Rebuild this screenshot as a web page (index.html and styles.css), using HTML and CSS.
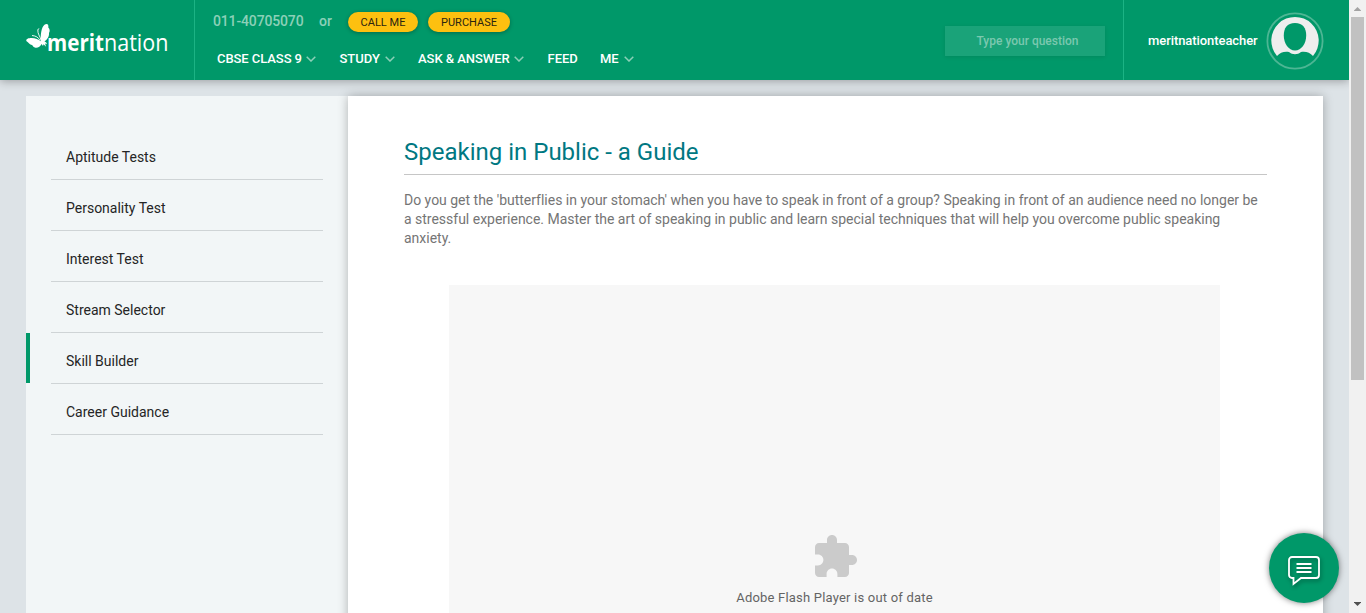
FILE: index.html
```html
<!DOCTYPE html>
<html lang="en">
<head>
<meta charset="utf-8">
<title>Speaking in Public - a Guide</title>
<link rel="stylesheet" href="styles.css">
</head>
<body>
<div class="page">
  <header class="header">
    <a class="logo">
      <svg width="150" height="40" viewBox="0 0 150 40">
        <g fill="#fff">
          <path d="M14.800 18.300C14.500 12 15.200 4.500 18.500 1.800 20.500.3 23 1 22.300 4.500c1.700 1.500 1.700 4 .7 5.500.3 4-2 6.500-4.500 8.500 1.500.5 2.300 1.500 2.300 2.700l-1.800-.7 1.200 3.200-2.700-2.500-.5 1.800-1.500-2C14.500 23.500 12 25 9.500 24.700 7.500 24.500 7 23 6 22 3.500 21.500 2.800 19.500.3 18 0 15.800 2.500 15 5.500 15c4 0 7 1.300 9.300 3.300z"/>
          <path d="M14 17.500C12.500 14.500 10 12.800 6 12.500M15 17c-1-4-3.500-6-3.200-10.500l1.400-.8" fill="none" stroke="#fff" stroke-width=".9"/>
          <text class="logo-bold" x="21" y="28" textLength="57" lengthAdjust="spacingAndGlyphs">merit</text>
          <text class="logo-light" x="78" y="28" textLength="64.500" lengthAdjust="spacingAndGlyphs">nation</text>
        </g>
      </svg>
    </a>
    <div class="header-main">
      <div class="contact">
        <span class="phone">011-40705070</span><span class="or">or</span>
        <a class="pill call">CALL ME</a><a class="pill purchase">PURCHASE</a>
      </div>
      <nav class="nav">
        <a class="n1">CBSE CLASS 9<svg class="chev" viewBox="0 0 10 6"><path d="M.7.7 5 5 9.300.7"/></svg></a>
        <a class="n2">STUDY<svg class="chev" viewBox="0 0 10 6"><path d="M.7.7 5 5 9.300.7"/></svg></a>
        <a class="n3">ASK &amp; ANSWER<svg class="chev" viewBox="0 0 10 6"><path d="M.7.7 5 5 9.300.7"/></svg></a>
        <a class="n4">FEED</a>
        <a class="n5">ME<svg class="chev" viewBox="0 0 10 6"><path d="M.7.7 5 5 9.300.7"/></svg></a>
      </nav>
    </div>
    <div class="ask">Type your question</div>
    <div class="user">
      <span class="user-name">meritnationteacher</span>
      <svg class="avatar" width="58" height="58" viewBox="0 0 58 58">
        <circle cx="29" cy="29" r="27.600" fill="none" stroke="#4db694" stroke-width="1.800"/>
        <path d="M11 44A23.700 23.700 0 1 1 47 44C44 40.500 39.500 39 35 40c-3.500 3-8.500 3-12 0-4.500-1-9 .5-12 4z" fill="#eee"/>
        <path d="M29 11c8 0 11.200 5 11.200 12.500C40.200 31.500 35.500 38.500 29 38.500S17.800 31.500 17.800 23.500C17.800 16 21 11 29 11z" fill="#009869"/>
      </svg>
    </div>
  </header>

  <div class="layout">
    <aside class="sidebar">
      <ul class="menu">
        <li>Aptitude Tests</li>
        <li>Personality Test</li>
        <li>Interest Test</li>
        <li>Stream Selector</li>
        <li class="active">Skill Builder</li>
        <li>Career Guidance</li>
      </ul>
    </aside>
    <main class="content">
      <h1>Speaking in Public - a Guide</h1>
      <p>Do you get the 'butterflies in your stomach' when you have to speak in front of a group? Speaking in front of an audience need no longer be a stressful experience. Master the art of speaking in public and learn special techniques that will help you overcome public speaking anxiety.</p>
      <div class="plugin">
        <svg width="48" height="48" viewBox="0 0 24 24"><path fill="#cbcbcb" d="M20.500 11H19V7c0-1.100-.9-2-2-2h-4V3.500C13 2.120 11.880 1 10.500 1S8 2.120 8 3.500V5H4c-1.100 0-1.990.9-1.990 2v3.800H3.500c1.490 0 2.700 1.210 2.700 2.700s-1.210 2.700-2.700 2.700H2V20c0 1.100.9 2 2 2h3.800v-1.500c0-1.490 1.210-2.700 2.700-2.700 1.490 0 2.700 1.210 2.700 2.700V22H17c1.100 0 2-.9 2-2v-4h1.500c1.380 0 2.500-1.120 2.500-2.500S21.880 11 20.500 11z"/></svg>
        <span>Adobe Flash Player is out of date</span>
      </div>
    </main>
  </div>
</div>

<div class="scrollbar">
  <svg width="17" height="17" viewBox="0 0 17 17"><path d="M8.500 7 12 10.500V11H5v-.5z" fill="#a3a3a3"/></svg>
  <div class="thumb"></div>
  <svg class="down" width="17" height="17" viewBox="0 0 17 17"><path d="M8.500 10 12 6.500V6H5v.5z" fill="#505050"/></svg>
</div>

<a class="chat">
  <svg width="34" height="32" viewBox="0 0 34 32">
    <path d="M5 2h24a3 3 0 0 1 3 3v15a3 3 0 0 1-3 3H14l-7.500 6V23H5a3 3 0 0 1-3-3V5a3 3 0 0 1 3-3z" fill="none" stroke="#fff" stroke-width="1.800"/>
    <path d="M9.500 9h15M9.500 13h15M9.500 17h15" stroke="#fff" stroke-width="1.800"/>
  </svg>
</a>
</body>
</html>
```
FILE: styles.css
```css
* { box-sizing: border-box; }
body {
  margin: 0;
  height: 613px;
  overflow: hidden;
  display: flex;
  background: #dde3e7;
  font-family: Roboto, "Liberation Sans", sans-serif;
}
.page { width: 1349px; height: 613px; display: flex; flex-direction: column; overflow: hidden; }

.header {
  flex: none;
  height: 80px;
  display: flex;
  background: #009869;
  box-shadow: 0 1px 9px rgba(0, 0, 0, .32);
  color: #fff;
}
.logo { width: 195px; padding: 23px 0 0 26px; border-right: 1px solid #1cb384; }
.logo svg { display: block; overflow: visible; }
.logo-bold { font: 700 23px "Open Sans", sans-serif; }
.logo-light { font: 400 23px "Open Sans", sans-serif; }
.header-main { width: 750px; padding: 11px 0 0 18px; }
.contact { display: flex; height: 21px; align-items: center; font-size: 14px; font-weight: 500; color: #8cd0b8; }
.phone { width: 106px; margin-top: -1px; letter-spacing: -.15px; }
.or { width: 29px; margin-top: -1px; }
.pill {
  height: 20px;
  margin-top: 1px;
  border-radius: 10px;
  background: #fdc010;
  box-shadow: 0 1px 4px rgba(0, 0, 0, .3);
  color: #2b2410;
  font-size: 11px;
  font-weight: 400;
  line-height: 21px;
  text-align: center;
}
.call { width: 70px; }
.purchase { width: 82px; margin-left: 10px; }
.nav { display: flex; padding: 18px 0 0 4px; font-size: 13px; font-weight: 500; line-height: 18px; white-space: nowrap; }
.n1 { width: 122.500px; letter-spacing: -.07px; }
.n2 { width: 78.500px; }
.n3 { width: 129.500px; letter-spacing: -.05px; }
.n4 { width: 52.500px; }
.chev { width: 10px; height: 6px; margin-left: 4.500px; vertical-align: 1px; fill: none; stroke: #8cd0b8; stroke-width: 1.500; }
.n2 .chev, .n5 .chev { margin-left: 5px; }
.ask {
  width: 160px;
  height: 30px;
  margin: 26px 18px 0 0;
  padding-left: 5px;
  background: #1aa379;
  box-shadow: 0 1px 4px rgba(0, 0, 0, .1);
  color: #7bc8af;
  font-size: 12px;
  font-weight: 500;
  line-height: 30px;
  text-align: center;
}
.user { width: 226px; display: flex; align-items: center; padding-left: 24px; border-left: 1px solid #1cb384; font-size: 13px; font-weight: 500; }
.user-name { width: 117.500px; letter-spacing: -.07px; }
.avatar { margin-top: 1px; }

.layout { flex: 1; display: flex; margin: 16px 26px 0; }
.sidebar { width: 322px; background: #f2f6f7; padding-top: 33px; }
.menu { margin: 0; padding: 0; list-style: none; font-size: 14px; color: #252525; }
.menu li {
  height: 51px;
  margin: 0 25px;
  padding: 18px 15px 0;
  border-bottom: 1px solid #cfd4d6;
  line-height: 20px;
}
.menu .active { margin-left: 0; padding-left: 36px; border-left: 4px solid #009869; border-bottom: 0; position: relative; height: 50px; margin-bottom: 1px; }
.menu .active::after { content: ""; position: absolute; left: 21px; right: 0; bottom: -1px; height: 1px; background: #cfd4d6; }
.content {
  width: 975px;
  padding: 39px 56px 0;
  background: #fff;
  box-shadow: 0 0 10px rgba(0, 0, 0, .28);
}
h1 { margin: 0; height: 40px; border-bottom: 1px solid #c6c6c6; color: #007882; font-size: 24px; font-weight: 400; line-height: 34px; }
p { margin: 16px 0 0; color: #757575; font-size: 14px; line-height: 19px; letter-spacing: -.01px; }
.plugin {
  width: 771px;
  height: 340px;
  margin: 37px 0 0 45px;
  padding-top: 248px;
  display: flex;
  flex-direction: column;
  align-items: center;
  background: #f7f7f7;
  color: #646464;
  font-size: 13px;
  line-height: 20px;
}
.plugin span { margin-top: 7px; letter-spacing: .2px; }

.scrollbar { width: 17px; height: 613px; display: flex; flex-direction: column; background: #f1f1f1; }
.thumb { width: 13px; height: 363px; margin-left: 2px; background: #c1c1c1; }
.down { margin-top: auto; }

.chat {
  position: absolute;
  left: 1269px;
  top: 533px;
  width: 70px;
  height: 70px;
  display: flex;
  align-items: center;
  justify-content: center;
  border-radius: 50%;
  background: #009869;
  box-shadow: 0 0 6px rgba(0, 0, 0, .5);
}
.chat svg { margin: 5px 0 0; filter: drop-shadow(1px 2px 2px rgba(0, 0, 0, .4)); }
```
